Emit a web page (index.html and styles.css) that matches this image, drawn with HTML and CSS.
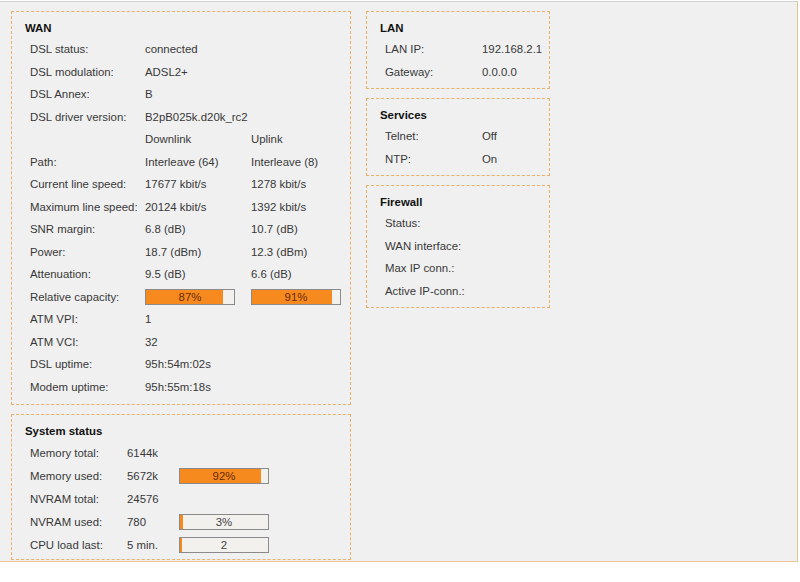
FILE: index.html
```html
<!DOCTYPE html>
<html lang="en">
<head>
    <meta charset="UTF-8">
    <title>Status</title>
    <link rel="stylesheet" href="styles.css">
</head>
<body>
    <div class="page">
        <div class="col-left">
            <div class="box wan">
                <div class="title">WAN</div>
                <div class="rows">
                    <span>DSL status:</span><span>connected</span><span></span>
                    <span>DSL modulation:</span><span>ADSL2+</span><span></span>
                    <span>DSL Annex:</span><span>B</span><span></span>
                    <span>DSL driver version:</span><span class="wide">B2pB025k.d20k_rc2</span>
                    <span></span><span>Downlink</span><span>Uplink</span>
                    <span>Path:</span><span>Interleave (64)</span><span>Interleave (8)</span>
                    <span>Current line speed:</span><span>17677 kbit/s</span><span>1278 kbit/s</span>
                    <span>Maximum line speed:</span><span>20124 kbit/s</span><span>1392 kbit/s</span>
                    <span>SNR margin:</span><span>6.8 (dB)</span><span>10.7 (dB)</span>
                    <span>Power:</span><span>18.7 (dBm)</span><span>12.3 (dBm)</span>
                    <span>Attenuation:</span><span>9.5 (dB)</span><span>6.6 (dB)</span>
                    <span>Relative capacity:</span>
                    <span><div class="bar"><div class="fill" style="width: 87%"></div><div class="label">87%</div></div></span>
                    <span><div class="bar"><div class="fill" style="width: 91%"></div><div class="label">91%</div></div></span>
                    <span>ATM VPI:</span><span>1</span><span></span>
                    <span>ATM VCI:</span><span>32</span><span></span>
                    <span>DSL uptime:</span><span>95h:54m:02s</span><span></span>
                    <span>Modem uptime:</span><span>95h:55m:18s</span><span></span>
                </div>
            </div>

            <div class="box system">
                <div class="title">System status</div>
                <div class="rows">
                    <span>Memory total:</span><span>6144k</span><span></span>
                    <span>Memory used:</span><span>5672k</span>
                    <span><div class="bar"><div class="fill" style="width: 92%"></div><div class="label">92%</div></div></span>
                    <span>NVRAM total:</span><span>24576</span><span></span>
                    <span>NVRAM used:</span><span>780</span>
                    <span><div class="bar"><div class="fill" style="width: 3%"></div><div class="label dark">3%</div></div></span>
                    <span>CPU load last:</span><span>5 min.</span>
                    <span><div class="bar"><div class="fill" style="width: 2%"></div><div class="label dark">2</div></div></span>
                </div>
            </div>
        </div>

        <div class="col-right">
            <div class="box small">
                <div class="title">LAN</div>
                <div class="rows">
                    <span>LAN IP:</span><span>192.168.2.1</span>
                    <span>Gateway:</span><span>0.0.0.0</span>
                </div>
            </div>
            <div class="box small">
                <div class="title">Services</div>
                <div class="rows">
                    <span>Telnet:</span><span>Off</span>
                    <span>NTP:</span><span>On</span>
                </div>
            </div>
            <div class="box small">
                <div class="title">Firewall</div>
                <div class="rows">
                    <span>Status:</span><span></span>
                    <span>WAN interface:</span><span></span>
                    <span>Max IP conn.:</span><span></span>
                    <span>Active IP-conn.:</span><span></span>
                </div>
            </div>
        </div>
    </div>
</body>
</html>
```

FILE: styles.css
```css
body {
    margin: 0;
    background-color: white;
    font-family: "Liberation Sans", Arial, sans-serif;
    font-size: 11.4px;
    color: #383838;
}
.page {
    margin-top: 1px;
    width: 786px;
    height: 550px;
    padding: 9px 0 0 11px;
    background-color: #f0f0f0;
    border-top: 1px solid #cfcfcf;
    border-right: 1px solid #e2c28e;
    border-bottom: 1px solid #f0c49a;
    display: flex;
    gap: 15px;
}
.col-left, .col-right {
    display: flex;
    flex-direction: column;
    gap: 9px;
}
.box {
    border: 1px dashed #eeb066;
    padding: 5px 0 5px 13px;
}
.title {
    font-weight: bold;
    color: #111;
    height: 21px;
    line-height: 22px;
}
.rows {
    display: grid;
    padding-left: 5px;
    align-items: center;
}
.rows > span {
    height: 22.5px;
    line-height: 22.5px;
    white-space: nowrap;
}
.wan {
    width: 325px;
    height: 382px;
}
.wan .rows {
    grid-template-columns: 115px 106px 90px;
}
.wan .wide {
    grid-column: span 2;
}
.system {
    width: 325px;
    height: 139px;
    padding-bottom: 0;
}
.system .title {
    height: 22px;
}
.system .rows {
    grid-template-columns: 97px 52px 90px;
}
.system .rows > span {
    height: 23px;
    line-height: 23px;
}
.small {
    width: 169px;
}
.small .rows {
    grid-template-columns: 97px 1fr;
}
.bar {
    position: relative;
    box-sizing: border-box;
    width: 90px;
    height: 16px;
    margin-top: 3px;
    border: 1px solid #8a8a8a;
    background-color: #f3f1ee;
}
.fill {
    height: 100%;
    background-color: #f68a1e;
}
.bar .label {
    position: absolute;
    top: 0;
    left: 0;
    right: 0;
    line-height: 14px;
    text-align: center;
    color: #6a2a08;
}
.bar .label.dark {
    color: #444;
}
```
